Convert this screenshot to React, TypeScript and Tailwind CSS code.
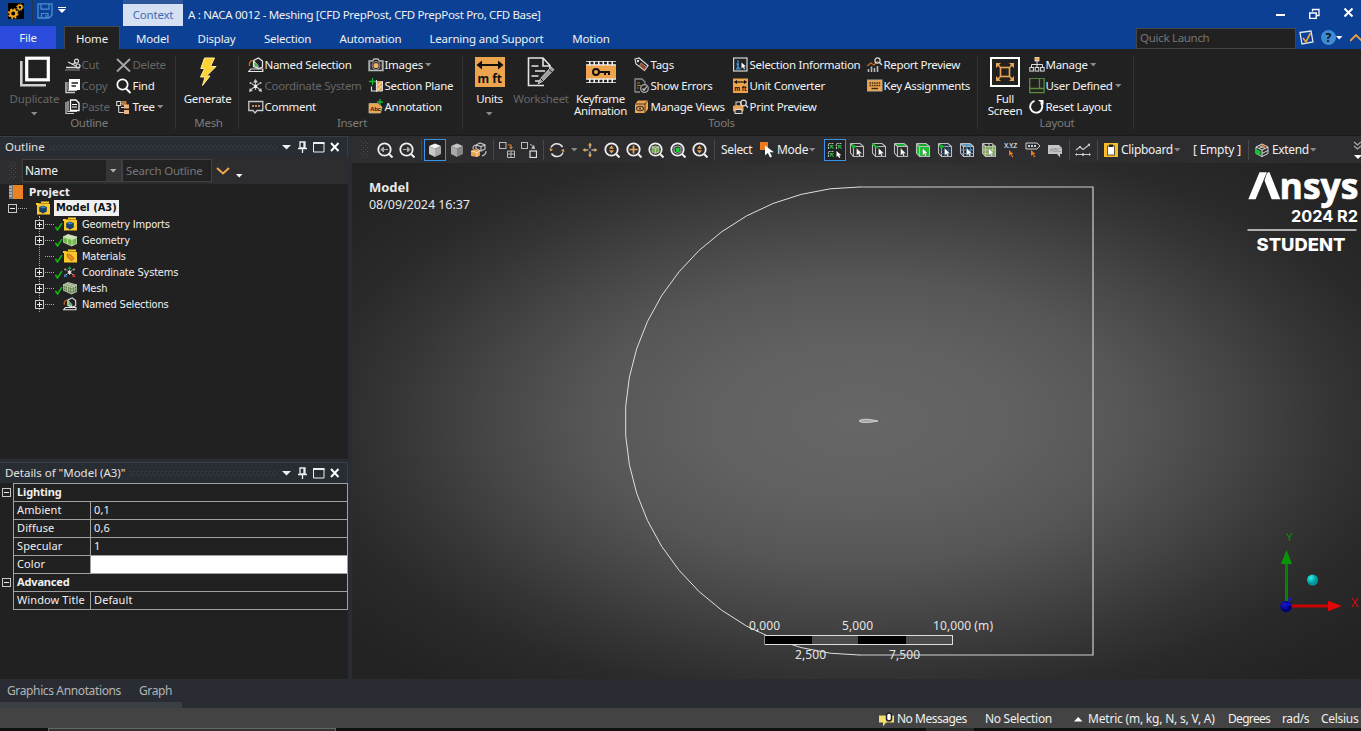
import React from "react";

type P = { children?: React.ReactNode };

const Svg = ({ children, w = 16, h = 16, box }: P & { w?: number; h?: number; box?: string }) => (
  <svg width={w} height={h} viewBox={box ?? `0 0 ${w} ${h}`} fill="none" className="block shrink-0">
    {children}
  </svg>
);

const Arrow = ({ c = "#8a8a8a" }: { c?: string }) => (
  <Svg w={7} h={4}><path d="M0 0h6.500L3.200 3.500z" fill={c} /></Svg>
);

/* ---------- title bar icons ---------- */
const Gears = () => (
  <Svg w={16} h={16}>
    <rect width="16" height="16" fill="#000" />
    <circle cx="5.2" cy="10.6" r="3" stroke="#f5a81c" strokeWidth="2" />
    <circle cx="5.2" cy="10.6" r="4.6" stroke="#f5a81c" strokeWidth="1.4" strokeDasharray="2 1.6" />
    <circle cx="11.9" cy="4.2" r="2" stroke="#f5a81c" strokeWidth="1.5" />
    <circle cx="11.9" cy="4.2" r="3.2" stroke="#f5a81c" strokeWidth="1" strokeDasharray="1.4 1.1" />
  </Svg>
);
const Save = () => (
  <Svg w={16} h={16}>
    <path d="M1 .8h14v11.4L11.8 15H1z" stroke="#4a90d0" strokeWidth="1.3" />
    <path d="M4 1v5.2h8V1M4.500 15v-4.500h6.500V15M9 12v3" stroke="#4a90d0" strokeWidth="1.200" />
  </Svg>
);

/* ---------- ribbon icons ---------- */
const Duplicate = () => (
  <Svg w={30} h={31}>
    <path d="M1.300 5v24.200H26" stroke="#d0d0d0" strokeWidth="2.600" />
    <rect x="6.700" y="2.200" width="21.600" height="21.600" stroke="#fff" strokeWidth="3.200" />
  </Svg>
);
const Cut = () => (
  <Svg>
    <path d="M1 10.500h14" stroke="#ddd" strokeWidth="1.500" />
    <path d="M3 5l8 4" stroke="#ddd" strokeWidth="1.300" />
    <circle cx="11.500" cy="4.200" r="2" stroke="#ddd" strokeWidth="1.200" />
    <circle cx="13" cy="9" r="2" stroke="#ddd" strokeWidth="1.200" />
    <path d="M7 7.500l3.500-2" stroke="#ddd" strokeWidth="1.200" />
    <path d="M0 13h15" stroke="#888" strokeWidth="1" />
  </Svg>
);
const Copy = () => (
  <Svg>
    <path d="M1 4v10.500h9" stroke="#ccc" strokeWidth="1.400" />
    <rect x="4" y="1" width="11" height="11" fill="#fff" />
    <path d="M3 4v8.500h9" stroke="#ccc" />
    <path d="M6.500 5h6.500M6.500 8h4.500" stroke="#222" strokeWidth="1.500" />
  </Svg>
);
const Paste = () => (
  <Svg>
    <path d="M1 3v11.500h8M3 2v10.500h9" stroke="#ccc" strokeWidth="1.200" />
    <path d="M5.500 1h5.500l3 3v7.500H5.500z" stroke="#fff" strokeWidth="1.300" />
    <path d="M7 5.500h5M7 8h5" stroke="#fff" />
  </Svg>
);
const Delete = () => <Svg><path d="M1 2l13 12.500M14 2L1 14.500" stroke="#a8a8a8" strokeWidth="1.800" /></Svg>;
const Find = () => (
  <Svg><circle cx="6.500" cy="6.500" r="5.200" stroke="#fff" strokeWidth="1.700" /><path d="M10 10.500l4.500 4.500" stroke="#fff" strokeWidth="2" /></Svg>
);
const Tree = () => (
  <Svg>
    <rect x=".7" y="2.500" width="4" height="4" stroke="#ddd" />
    <path d="M2.700 7v6.500h5M4.500 4.500h2M5 8.500h3.500" stroke="#ddd" />
    <rect x="5.500" y="2" width="5" height="4.500" fill="#b8793a" />
    <rect x="8" y="5.500" width="5" height="4" fill="#eeb27a" />
    <rect x="8" y="11" width="5" height="4" fill="#eeb27a" />
  </Svg>
);
const Bolt = () => (
  <Svg w={20} h={30}>
    <path d="M6.500 1h10l-4 8.500h5.500L8.500 19h3.500L4.500 28.500l2.500-8.500H2.500l4-8.500H2.800z" fill="#ffd231" stroke="#fff0a0" strokeWidth="1" />
  </Svg>
);
const Named = () => (
  <Svg>
    <path d="M5.500 3.500l5-2.500 4 3v6l-4 1.500-5-2z" stroke="#e8e8e8" strokeWidth="1.200" />
    <path d="M6 4l4 4.500V11L6 8z" fill="#17b838" stroke="#e8e8e8" strokeWidth=".8" />
    <path d="M4.500 3.500C1.500 4 1 7 1.500 9" stroke="#d66a18" strokeWidth="1.300" />
    <path d="M.8 14.500h14V12H2.800z" stroke="#e8e8e8" strokeWidth="1.200" />
  </Svg>
);
const Coord = ({ color }: { color?: boolean }) => (
  <Svg>
    <path d="M7.500 8V3M7.500 8L2 12.500M7.500 8L13 12.500M7.500 8L3.500 5.500M7.500 8l4-2.500M7.500 8v4" stroke="#bbb" strokeWidth="1.200" strokeDasharray={color ? "3 1" : undefined} />
    <path d="M7.500 1L5 4.500h5z" fill={color ? "#10a030" : "#ccc"} />
    <path d="M1 14l.8-4 3 3z" fill={color ? "#3a7fd0" : "#ccc"} />
    <path d="M14 14l-.8-4-3 3z" fill={color ? "#e03030" : "#ccc"} />
    <circle cx="2.500" cy="5" r="1.100" fill="#bbb" /><circle cx="12.500" cy="5" r="1.100" fill="#bbb" />
    <rect x="6" y="7" width="3" height="3" fill="#eee" />
  </Svg>
);
const Comment = () => (
  <Svg>
    <path d="M.8 2.500h14v9H9l-2 2.500-2-2.500H.8z" stroke="#c8c8c8" strokeWidth="1.300" />
    <path d="M4 7h2M7 7h2M10 7h2" stroke="#eeb27a" strokeWidth="1.500" />
  </Svg>
);
const Camera = () => (
  <Svg>
    <path d="M1 4h3.500L6 2h4l1.500 2H15v9.500H1z" stroke="#bbb" strokeWidth="1.300" />
    <circle cx="8" cy="8.500" r="4" stroke="#999" /><circle cx="8" cy="8.500" r="2.600" fill="#f5b168" />
    <path d="M1.800 5v8M14.200 5v8" stroke="#bbb" />
  </Svg>
);
const Section = () => (
  <Svg>
    <path d="M4.500 0v7M1 3.500h7" stroke="#13b52f" strokeWidth="1.300" />
    <path d="M3.500 8.500V13h4.500M8.500 2v12" stroke="#ddd" strokeWidth="1.200" />
    <rect x="9" y="3" width="5.500" height="10" fill="#eda44e" /><path d="M9.500 8l4-4M9.500 12l4-4" stroke="#fff0d8" />
    <path d="M14.500 3v10H8" stroke="#ddd" />
  </Svg>
);
const Annot = () => (
  <Svg>
    <path d="M1 4.500h9l4 3.500-1.500 6H1z" fill="#eda44e" stroke="#c8b090" strokeWidth=".8" />
    <text x="2" y="11.500" fontSize="6" fontWeight="700" fontFamily="Liberation Sans" letterSpacing="-.2" fill="#222">Abc</text>
    <path d="M12 0v6M9 3h6" stroke="#13b52f" strokeWidth="1.400" />
  </Svg>
);
const Units = () => (
  <Svg w={30} h={30}>
    <rect width="30" height="30" fill="#eda44e" />
    <path d="M3 8h24" stroke="#111" strokeWidth="2" />
    <path d="M1.500 8L7 3.500v9zM28.500 8L23 3.500v9z" fill="#111" />
    <text x="2.500" y="25.500" fontSize="12" fontWeight="700" fontFamily="Noto Sans" letterSpacing="0" textLength="24.500" lengthAdjust="spacingAndGlyphs" fill="#111">m ft</text>
  </Svg>
);
const Worksheet = () => (
  <Svg w={28} h={30}>
    <path d="M17 28.500H1.500V1H16l7 7.500v3M16 1v8h7" stroke="#e4e4e4" strokeWidth="1.600" />
    <path d="M4.500 9h7M8 14h10M4.500 19h7M8 24h5" stroke="#e4e4e4" strokeWidth="1.300" />
    <path d="M11 27l2.500-5.500L24 10l3 2.500-11 11.500z" fill="#9b9b9b" stroke="#ddd" strokeWidth=".8" />
    <path d="M13.500 21.500l2.500 2.500M22 12.500l3 2.500" stroke="#222" />
  </Svg>
);
const Keyframe = () => (
  <Svg w={30} h={22}>
    <rect width="30" height="22" fill="#f4f4f4" />
    <path d="M0 2h30M0 20h30" stroke="#222" strokeWidth="2.600" strokeDasharray="3 1.500" />
    <rect y="4.500" width="30" height="13" fill="#eda44e" />
    <circle cx="10" cy="11" r="3" stroke="#111" strokeWidth="2" /><path d="M13 11h10v3M19 11v3" stroke="#111" strokeWidth="2" />
  </Svg>
);
const Tags = () => (
  <Svg>
    <path d="M1 2l4-1 9 7.500-3.500 5L2 7z" stroke="#ddd" strokeWidth="1.200" />
    <path d="M7 6l5.500 4-2 3-5-4z" fill="#8a4a2a" stroke="#c8a090" strokeWidth=".7" /><circle cx="4" cy="4" r="1.200" fill="#ddd" />
  </Svg>
);
const Errors = () => (
  <Svg>
    <path d="M6 14H1V1h7l3 3v2" stroke="#8c8c8c" strokeWidth="1.300" />
    <path d="M3 5h3M3 7.500h4M3 10h2" stroke="#b87838" />
    <circle cx="10.500" cy="10.500" r="3.800" stroke="#a8a8a8" strokeWidth="1.300" /><path d="M8.500 10.500l1.500 1.700 2.800-3.700" stroke="#ccc" strokeWidth="1.200" />
  </Svg>
);
const Views = () => (
  <Svg w={15}>
    <path d="M1 5l3-3.500h10v8.500l-3 4H1z" fill="#eda44e" /><path d="M1 5h10v9M11 5l3-3.500" stroke="#222" strokeWidth=".8" />
    <ellipse cx="6" cy="9.500" rx="3.500" ry="2.200" stroke="#333" strokeWidth="1.100" /><circle cx="6" cy="9.500" r="1.100" fill="#333" />
  </Svg>
);
const SelInfo = () => (
  <Svg w={15}>
    <rect x=".6" y="1" width="13.400" height="13" stroke="#d8d8d8" strokeWidth="1.200" fill="#242424" />
    <path d="M5 3.500v2M3.500 7H5v4.500M3 11.700h4.500" stroke="#3c8dd0" strokeWidth="1.800" />
    <path d="M8.500 5.500v6l1.500-1.500 1 2.500 1-.5-1-2.500h2z" fill="#fff" />
  </Svg>
);
const UnitConv = () => (
  <Svg>
    <rect y=".5" width="15" height="14.500" fill="#eda44e" />
    <path d="M2 4h11" stroke="#111" strokeWidth="1.200" /><path d="M.8 4L4 2v4zM14.200 4L11 2v4z" fill="#111" />
    <text x="1.200" y="13" fontSize="7" fontWeight="700" fontFamily="Noto Sans" letterSpacing="0" textLength="12.600" lengthAdjust="spacingAndGlyphs" fill="#111">m ft</text>
  </Svg>
);
const Print = () => (
  <Svg>
    <rect x="3" y="3" width="5" height="4" stroke="#ddd" /><rect x="0" y="6.500" width="10.500" height="6" rx="1" fill="#eda44e" />
    <rect x="2" y="10.500" width="7" height="4" fill="#333" stroke="#ddd" />
    <circle cx="10.500" cy="4" r="2.800" stroke="#ddd" strokeWidth="1.200" /><path d="M12.500 6l2.500 2.500" stroke="#ddd" strokeWidth="1.400" />
  </Svg>
);
const Report = () => (
  <Svg>
    <path d="M1.500 15v-3M4.500 15V9.500M7.500 15v-4M10.500 15V9" stroke="#b8b8b8" strokeWidth="1.600" />
    <path d="M0 9l4-3 3 2 4-4" stroke="#c26a20" strokeWidth="1.300" />
    <circle cx="10.500" cy="3.500" r="2.600" stroke="#ddd" strokeWidth="1.200" /><path d="M12.500 5.500L15 8" stroke="#ddd" strokeWidth="1.400" />
  </Svg>
);
const Keyboard = () => (
  <Svg w={16}>
    <rect x=".5" y="2" width="14.500" height="11" fill="#eda44e" stroke="#b8a890" />
    <path d="M2.500 5h11M2.500 7.500h11" stroke="#3a2a10" strokeWidth="1.500" strokeDasharray="1.500 .8" /><path d="M4.500 10.500h6.500" stroke="#3a2a10" strokeWidth="1.400" />
  </Svg>
);
const Full = () => (
  <Svg w={30} h={30}>
    <rect x="1" y="1" width="28" height="28" stroke="#fff" strokeWidth="2" />
    <rect x="10.500" y="10.500" width="9" height="9" stroke="#eda44e" strokeWidth="1.600" />
    <path d="M10 10L6.500 6.500M20 10l3.500-3.500M10 20l-3.500 3.500M20 20l3.500 3.500" stroke="#eda44e" strokeWidth="1.600" />
    <path d="M6 11V6h5zM24 11V6h-5zM6 19v5h5zM24 19v5h-5z" fill="#eda44e" />
  </Svg>
);
const Manage = () => (
  <Svg>
    <rect x="6" y="0" width="4" height="4" fill="#eda44e" stroke="#fff" strokeWidth=".7" />
    <path d="M8 4v6M2.500 10.500V7.500h11v3" stroke="#ddd" />
    <rect x=".8" y="10.500" width="3.600" height="3.600" stroke="#ddd" /><rect x="6.200" y="10.500" width="3.600" height="3.600" stroke="#ddd" /><rect x="11.600" y="10.500" width="3.600" height="3.600" stroke="#ddd" />
  </Svg>
);
const UserDef = () => (
  <Svg><rect x=".7" y=".2" width="14.400" height="14.400" stroke="#5d8c3c" strokeWidth="1.300" /><path d="M1 10.500h14M10.500 .5v10" stroke="#5d8c3c" strokeWidth="1.300" /></Svg>
);
const Reset = () => (
  <Svg><path d="M5.500 1.900A6 6 0 1 0 12 4" stroke="#fff" strokeWidth="1.900" /><path d="M9 1h5.500v5z" fill="#fff" /></Svg>
);

/* ---------- graphics toolbar icons ---------- */
const Lens = ({ children }: P) => (
  <Svg>
    <circle cx="7.500" cy="7.500" r="6.200" stroke="#f0f0f0" strokeWidth="1.800" /><path d="M12 12l3.500 3.500" stroke="#f0f0f0" strokeWidth="2" />
    {children}
  </Svg>
);
const Solid = ({ top = "#f4f4f4", left = "#c8c8c8", right = "#a8a8a8" }) => (
  <Svg>
    <path d="M8 1.500l6 2.500-6 2.800L2 4z" fill={top} /><path d="M2 4l6 2.800V15l-6-3z" fill={left} /><path d="M14 4L8 6.800V15l6-3z" fill={right} />
  </Svg>
);
const Cursor = ({ c = "#fff" }: { c?: string }) => (
  <path d="M7.500 6v7.500l1.800-1.600 1.300 3 1.300-.6-1.300-2.900h2.400z" fill={c} stroke="#222" strokeWidth=".3" />
);
const Wire = ({ face, front, dot, edge, mesh }: { face?: string; front?: string; dot?: boolean; edge?: boolean; mesh?: string }) => (
  <Svg>
    {face && <path d="M1.500 1.500h9.500l3.500 3H5z" fill={face} />}
    {front && <path d="M4.500 4.500h10v10h-10zM1.500 2v9l3 3v-9.500z" fill={front} />}
    <path d="M4.500 4.500h10v10h-10zM1.500 1.500l3 3M1.500 1.500H11l3.500 3M1.500 1.500v9.500l3 3.500" stroke="#bdbdbd" strokeWidth="1.100" />
    {mesh && <path d="M8 2v12M11.500 3v11M2 8h12M3 11.500h11" stroke={mesh} strokeWidth="1" />}
    {edge && <path d="M1.500 1.500l3 3 3 .5" stroke="#13b52f" strokeWidth="2.200" />}
    {dot && <circle cx="4.500" cy="4.500" r="1.900" fill="#13b52f" />}
    <Cursor />
  </Svg>
);
const GridSel = () => (
  <Svg>
    <path d="M1.500 7V1.500H7M9.500 7V1.500H15M1.500 15V9.500H7" stroke="#bbb" strokeDasharray="2 .8" strokeWidth="1.200" />
    <path d="M3 3h4L5.500 4.500 7 6.500l-1 .5-1.500-1.500L3 7zM11 3h4l-1.500 1.500L15 6.500l-1 .5-1.500-1.500L11 7zM3 11h4l-1.500 1.500L7 14.500l-1 .5-1.500-1.500L3 15z" fill="#23a43a" />
    <path d="M9.500 9v6l1.500-1.300 1 2.300 1.300-.6-1-2.200h2z" fill="#fff" />
  </Svg>
);

/* ---------- building blocks ---------- */
const Item = ({ icon, label, off, drop }: { icon: React.ReactNode; label: string; off?: boolean; drop?: boolean }) => (
  <div className={`flex h-[21px] items-center whitespace-nowrap ${off ? "text-[#666]" : "text-[#f2f2f2]"}`}>
    <span className="flex w-[16.500px] shrink-0">{icon}</span>
    <span>{label}</span>
    {drop && <span className="ml-[2px]"><Arrow /></span>}
  </div>
);
const Big = ({ icon, label, off, drop, w }: { icon: React.ReactNode; label: React.ReactNode; off?: boolean; drop?: boolean; w: string }) => (
  <div className={`flex shrink-0 flex-col items-center text-center ${w} ${off ? "text-[#666]" : "text-[#f2f2f2]"}`}>
    <div className="flex h-[35px] items-center">{icon}</div>
    <div className="mt-[4px] leading-[11.500px] whitespace-nowrap">{label}</div>
    {drop && <div className="mt-[7px]"><Arrow /></div>}
  </div>
);
const Group = ({ w, label, children }: P & { w: string; label: string }) => (
  <div className={`flex h-[86px] shrink-0 ${w}`}>
    <div className="flex min-w-0 flex-1 flex-col pt-[5px]">
      <div className="flex h-[63px]">{children}</div>
      <div className="pl-[3px] text-center leading-[12px] text-[#7c7c7c]">{label}</div>
    </div>
    <div className="mt-[7px] h-[73px] w-px bg-[#333]" />
  </div>
);
const Col = ({ w, children }: P & { w: string }) => <div className={`flex shrink-0 flex-col ${w}`}>{children}</div>;
const Sep = () => <div className="flex w-[6px] shrink-0 justify-center"><div className="h-[20px] w-px bg-[#484848]" /></div>;
const Cell = ({ children, on }: P & { on?: boolean }) => (
  <div className={`flex size-[22px] shrink-0 items-center justify-center ${on ? "border border-[#3494f0] bg-[#222]" : ""}`}>{children}</div>
);
const Dots = ({ className }: { className: string }) => (
  <svg className={`block ${className}`}>
    <defs>
      <pattern id="grip" width="4" height="4" patternUnits="userSpaceOnUse">
        <path d="M0 0h1v1H0zM2 2h1v1H2z" fill="#45494f" />
      </pattern>
    </defs>
    <rect width="100%" height="100%" fill="url(#grip)" />
  </svg>
);

const Header = ({ title }: { title: string }) => (
  <div className="flex h-[21px] items-center border-t border-r border-[#3a3d43] bg-[#282c33] pr-[7px] pl-[5px] text-[#e2e2e2]">
    <span className="tracking-[-0.020px] whitespace-nowrap">{title}</span>
    <Dots className="mr-[4px] ml-[5px] h-[5px] w-0 flex-1" />
    <Svg w={9} h={5}><path d="M0 0h9L4.500 4.500z" fill="#eee" /></Svg>
    <span className="ml-[7px]"><Svg w={9} h={12}><path d="M2 1h5v6H2zM0 7.500h9M4.500 8v4M6 1v6" stroke="#eee" strokeWidth="1.300" /></Svg></span>
    <span className="ml-[6px]"><Svg w={12} h={11}><path d="M.5 1h10.500v9H.5z" stroke="#eee" /><path d="M0 1h11.500" stroke="#eee" strokeWidth="2" /></Svg></span>
    <span className="ml-[5px]"><Svg w={10} h={10}><path d="M1 1l7.500 8M8.500 1L1 9" stroke="#fff" strokeWidth="1.900" /></Svg></span>
  </div>
);

const Expander = ({ minus }: { minus?: boolean }) => (
  <Svg w={9} h={9}><rect x=".5" y=".5" width="8" height="8" stroke="#c8c8c8" /><path d={minus ? "M2 4.500h5" : "M2 4.500h5M4.500 2v5"} stroke="#eee" /></Svg>
);

/* ---------- tree icons ---------- */
const Folder = ({ cube, tag }: { cube?: boolean; tag?: boolean }) => (
  <Svg w={14} h={14}>
    <path d="M0 2h5V.5h8V3h1v10.500H1V4H0z" fill="#fcc92c" />
    <path d="M3 2.500h10" stroke="#b88a10" />
    {cube && <><path d="M7 4.500l3.800 1.500v4.500L7 12.500l-3.800-2V6z" fill="#14406e" /><path d="M7 5l3 1.200L7 7.600 4 6.200z" fill="#3f86c4" /></>}
    {tag && <path d="M4 5l3 .3 4 4-2.500 2.700-4-4z" fill="#e88a28" stroke="#a06010" strokeWidth=".7" />}
  </Svg>
);
const GeoBlock = ({ mesh }: { mesh?: boolean }) => (
  <Svg w={14} h={14}>
    <path d="M0 4l5-2.500L14 4v6.500L8.500 13 0 9z" fill={mesh ? "#5f7a45" : "#74b74a"} />
    <path d="M0 4l5-2.500L14 4 9 6.500z" fill={mesh ? "#7f9368" : "#c3e2ae"} />
    <path d="M0 4l9 2.500 5-2.500M9 6.500V13M4.500 5.200V11M4 2.500l8 3M0 4v5l8.500 4 5.500-2.500V4L5 1.500z" stroke="#dfe9d6" strokeWidth=".7" />
    {mesh && <path d="M0 6.500l9 3 5-2.500M2.500 5v5M6.500 6v6M11.500 5.500v6M2 3l9 2.500" stroke="#c8d2be" strokeWidth=".5" />}
  </Svg>
);

const rows = [
  { label: "Geometry Imports", icon: <Folder cube />, exp: true, ok: true },
  { label: "Geometry", icon: <GeoBlock />, exp: true, ok: true },
  { label: "Materials", icon: <Folder tag />, exp: false, ok: true },
  { label: "Coordinate Systems", icon: <Coord color />, exp: true, ok: true },
  { label: "Mesh", icon: <GeoBlock mesh />, exp: true, ok: true },
  { label: "Named Selections", icon: <Named />, exp: true, ok: false },
];

const details: [string, string][][] = [
  [["Ambient", "0,1"], ["Diffuse", "0,6"], ["Specular", "1"], ["Color", "#"]],
  [["Window Title", "Default"]],
];

const DetailGroup = ({ name, list }: { name: string; list: [string, string][] }) => (
  <div className="flex">
    <div className="w-[13px] shrink-0 pt-[4px] pl-[2px]"><Expander minus /></div>
    <div className="flex-1 border-x border-[#a0a0a0]">
      <div className="h-[18px] border-b border-[#a0a0a0] pl-[3px] leading-[16px] font-bold tracking-[-0.150px]">{name}</div>
      {list.map(([k, v]) => (
        <div key={k} className="flex h-[18px] border-b border-[#a0a0a0] leading-[16px]">
          <div className="w-[77px] shrink-0 border-r border-[#a0a0a0] pl-[3px] whitespace-nowrap">{k}</div>
          {v === "#" ? <div className="flex-1 bg-white" /> : <div className="pl-[3px]">{v}</div>}
        </div>
      ))}
    </div>
  </div>
);

/* far-field boundary: 25 chords on a half circle closed by a box */
const boundary = Array.from({ length: 26 }, (_, i) => {
  const a = Math.PI / 2 + (i * Math.PI) / 25;
  return `${(507.500 + 234.300 * Math.cos(a)).toFixed(1)},${(258 - 234 * Math.sin(a)).toFixed(1)}`;
}).join(" ");

const Viewport = () => (
  <div className="relative ml-px h-[516px] overflow-hidden bg-[radial-gradient(ellipse_545px_285px_at_508px_258px,#666_0%,#616161_28%,#565656_50%,#464646_68%,#353535_86%,#2a2a2a_100%,#222_122%)]">
    <svg width="1009" height="516" viewBox="0 0 1009 516" fill="none" className="absolute inset-0">
      <polyline points={boundary} stroke="#e0e0e0" strokeWidth="1" />
      <path d="M507 24h234v468H507" stroke="#cfcfcf" strokeWidth="1.200" />
      <path d="M507 258c2-2.400 9-2.400 19 0-10 2-17 2-19 0z" fill="#aaa" stroke="#ddd" strokeWidth=".8" />
      <rect x="413" y="472.500" width="187.500" height="9" fill="none" stroke="#ddd" />
      <path d="M413 473h47v8h-47zM506 473h48v8h-48z" fill="#000" />
      <path d="M460 473h46v8h-46zM554 473h46v8h-46z" fill="#4b4b4b" />
      <path d="M934.500 441v-44" stroke="#078207" strokeWidth="3" /><path d="M934.500 387l5.500 14h-11z" fill="#079607" />
      <path d="M934 443h44" stroke="#c80404" strokeWidth="3.200" /><path d="M990 443l-14-5.200v10.400z" fill="#e00808" />
      <circle cx="934" cy="443.500" r="5.700" fill="url(#blue)" /><circle cx="960.500" cy="417" r="5.500" fill="url(#cyan)" />
      <defs>
        <radialGradient id="blue" cx=".35" cy=".35"><stop stopColor="#1818d8" /><stop offset="1" stopColor="#000078" /></radialGradient>
        <radialGradient id="cyan" cx=".35" cy=".3"><stop stopColor="#30f0f0" /><stop offset="1" stopColor="#009898" /></radialGradient>
      </defs>
      <g fontFamily="Noto Sans" fontSize="12" letterSpacing="0" fill="#e4e4e4">
        <text x="397" y="467" textLength="31">0,000</text>
        <text x="490" y="467" textLength="31">5,000</text>
        <text x="581" y="467" textLength="60">10,000 (m)</text>
        <text x="443" y="496" textLength="31">2,500</text>
        <text x="537" y="496" textLength="31">7,500</text>
      </g>
      <g fontFamily="Noto Sans" fontSize="11.500" letterSpacing="0">
        <text x="934" y="378" fill="#0a8a0a">Y</text><text x="999" y="444" fontSize="12.500" fill="#d80808">X</text><text x="935" y="442" fontSize="9" fill="#1818ff">Z</text>
      </g>
      {/* brand mark */}
      <path d="M896.300 36.300l11.200-27h7.300l-11.200 27zM914.800 10.500l1.400-1.200h1.300l10.800 27h-8.600l-7.200-18.800z" fill="#fff" />
      <text x="927.500" y="36.300" fontFamily="Open Sans" fontSize="36.500" fontWeight="700" letterSpacing="0" textLength="79" lengthAdjust="spacingAndGlyphs" fill="#fff" stroke="#fff" strokeWidth=".7">nsys</text>
      <text x="939" y="59" fontFamily="Inter" fontSize="16" fontWeight="700" letterSpacing="0" textLength="67" lengthAdjust="spacingAndGlyphs" fill="#fff">2024 R2</text>
      <path d="M895.500 67h109" stroke="#ddd" strokeWidth="1.500" />
      <text x="904.500" y="88" fontFamily="Inter" fontSize="18" fontWeight="800" letterSpacing="0" textLength="89" lengthAdjust="spacingAndGlyphs" fill="#fff">STUDENT</text>
    </svg>
    <div className="relative flex flex-col pt-[16px] pl-[17px] text-[13px] leading-[17px] tracking-[-0.050px] text-[#e8e8e8]">
      <span className="font-bold">Model</span>
      <span className="text-[12.500px]">08/09/2024 16:37</span>
    </div>
  </div>
);

const tabs: [string, string][] = [
  ["Home", "w-[56px]"], ["Model", "w-[65px]"], ["Display", "w-[63px]"], ["Selection", "w-[79px]"],
  ["Automation", "w-[87px]"], ["Learning and Support", "w-[145px]"], ["Motion", "w-[64px]"],
];

export default function App() {
  return (
    <div className="flex h-[731px] w-[1361px] flex-col overflow-hidden bg-[#212121] font-['Noto_Sans',sans-serif] text-[11.500px] tracking-[-0.290px] text-[#f0f0f0]">
      {/* title bar */}
      <div className="flex h-[26px] shrink-0 bg-[#0b4094]">
        <div className="flex w-[32px] pt-[3px] pl-[8px]"><Gears /></div>
        <div className="h-[23px] w-px bg-[#26344e]" />
        <div className="w-[20px] pt-[3px] pl-[4px]"><Save /></div>
        <div className="w-[70px] pt-[7px] pl-[5px]"><Svg w={8} h={6}><path d="M0 .5h8" stroke="#fff" /><path d="M0 2h8L4 6z" fill="#fff" /></Svg></div>
        <div className="w-[60px] border-t-4 border-[#2c569c] bg-[#d6e0f3] text-center leading-[22px] tracking-[-0.200px] text-[#3f6cb4]">Context</div>
        <div className="flex-1 pl-[5px] leading-[30px] tracking-[-0.320px] whitespace-nowrap">A : NACA 0012 - Meshing [CFD PrepPost, CFD PrepPost Pro, CFD Base]</div>
        <div className="flex items-center gap-[24px] pr-[7px]">
          <Svg w={10} h={10}><path d="M1 7h9" stroke="#fff" strokeWidth="2" /></Svg>
          <Svg w={11} h={11}><path d="M3.500 3.500V1.500H10v6H8" stroke="#fff" strokeWidth="1.300" /><path d="M.7 5h6.500v5.400H.7z" stroke="#fff" strokeWidth="1.400" /></Svg>
          <Svg w={10} h={10}><path d="M.5 .5l8 8M8.500 .5l-8 8" stroke="#fff" strokeWidth="2" /></Svg>
        </div>
      </div>

      {/* ribbon tabs */}
      <div className="flex h-[23px] shrink-0 bg-[#0b4094] tracking-[-0.200px]">
        <div className="mr-[8px] w-[56px] bg-[#2a4bdb] text-center leading-[24px]">File</div>
        {tabs.map(([t, w], i) => (
          <div key={t} className={`${w} text-center whitespace-nowrap ${i ? "leading-[25px]" : "border border-b-0 border-[#444] bg-[#212121] leading-[23px]"}`}>{t}</div>
        ))}
        <div className="ml-auto flex items-center">
          <div className="mt-[2px] h-[21px] w-[160px] border border-[#454545] bg-[#212121] pl-[3px] leading-[18px] tracking-[-0.300px] text-[#757575]">Quick Launch</div>
          <span className="ml-[3px]"><Svg w={15} h={15}><path d="M1 2.500l11-1.500 2 11L3 14z" stroke="#dde6f4" strokeWidth="1.300" /><path d="M4 8l3 4 4.500-9" stroke="#f0a040" strokeWidth="1.700" /></Svg></span>
          <span className="ml-[7px]"><Svg w={15} h={15}><circle cx="7.500" cy="7.500" r="7.500" fill="#3d8bd2" /><text x="4.500" y="12" fontSize="12" fontWeight="700" fontFamily="Noto Sans" fill="#111">?</text></Svg></span>
          <Arrow c="#fff" />
          <span className="ml-[7px]"><Svg w={11} h={8}><path d="M0 7l6-6 6 6" stroke="#f0a040" strokeWidth="1.800" /></Svg></span>
        </div>
      </div>

      {/* ribbon */}
      <div className="flex h-[87px] shrink-0 border-b border-[#1a1a1a]">
        <Group w="w-[176px]" label="Outline">
          <Big w="w-[65px] pl-[4px]" icon={<Duplicate />} label={<span className="tracking-[-0.150px]">Duplicate</span>} off drop />
          <Col w="w-[51px]"><Item icon={<Cut />} label="Cut" off /><Item icon={<Copy />} label="Copy" off /><Item icon={<Paste />} label="Paste" off /></Col>
          <Col w="w-[59px]"><Item icon={<Delete />} label="Delete" off /><Item icon={<Find />} label="Find" /><Item icon={<Tree />} label="Tree" drop /></Col>
        </Group>
        <Group w="w-[63px]" label="Mesh"><Big w="w-[63px]" icon={<Bolt />} label="Generate" /></Group>
        <Group w="w-[224px]" label="Insert">
          <Col w="w-[129px] pl-[9px]"><Item icon={<Named />} label="Named Selection" /><Item icon={<Coord />} label="Coordinate System" off /><Item icon={<Comment />} label="Comment" /></Col>
          <Col w="w-[90px]"><Item icon={<Camera />} label="Images" drop /><Item icon={<Section />} label="Section Plane" /><Item icon={<Annot />} label="Annotation" /></Col>
        </Group>
        <Group w="w-[515px]" label="Tools">
          <Big w="w-[53px]" icon={<Units />} label="Units" drop />
          <Big w="w-[50px]" icon={<Worksheet />} label="Worksheet" off />
          <Big w="w-[68px] pl-[1px]" icon={<Keyframe />} label={<>Keyframe<br />Animation</>} />
          <Col w="w-[99px]"><Item icon={<Tags />} label="Tags" /><Item icon={<Errors />} label="Show Errors" /><Item icon={<Views />} label="Manage Views" /></Col>
          <Col w="w-[134px]"><Item icon={<SelInfo />} label="Selection Information" /><Item icon={<UnitConv />} label="Unit Converter" /><Item icon={<Print />} label="Print Preview" /></Col>
          <Col w="w-[100px] tracking-[-0.360px]"><Item icon={<Report />} label="Report Preview" /><Item icon={<Keyboard />} label="Key Assignments" /></Col>
        </Group>
        <Group w="w-[156px]" label="Layout">
          <Big w="w-[51px] pl-[3px]" icon={<Full />} label={<>Full<br />Screen</>} />
          <Col w="w-[100px]"><Item icon={<Manage />} label="Manage" drop /><Item icon={<UserDef />} label="User Defined" drop /><Item icon={<Reset />} label="Reset Layout" /></Col>
        </Group>
      </div>

      {/* workspace */}
      <div className="flex h-[543px] shrink-0 bg-[#292d33]">
        <div className="flex w-[348px] flex-col">
          <Header title="Outline" />
          <div className="flex h-[27px] items-center bg-[#2d2d30] pl-[9px]">
            <Dots className="mr-[5px] h-[17px] w-[8px]" />
            <div className="flex h-[23px] w-[100px] items-center border border-[#404040] bg-[#222]">
              <span className="flex-1 pl-[2px] text-[12px]">Name</span>
              <span className="flex h-full w-[15px] items-center justify-center bg-[#353538]"><Arrow c="#b0b0b0" /></span>
            </div>
            <div className="h-[23px] w-[90px] border border-[#404040] bg-[#222] pl-[3px] leading-[21px] tracking-[-0.180px] whitespace-nowrap text-[#777]">Search Outline</div>
            <span className="ml-[4px]"><Svg w={14} h={8}><path d="M1 1l6 5.500L13 1" stroke="#f0a848" strokeWidth="2" /></Svg></span>
            <span className="mt-[10px] ml-[6px]"><Arrow c="#fff" /></span>
          </div>
          <div className="h-[275px] bg-[#212121] font-['DejaVu_Sans_Condensed','DejaVu_Sans',sans-serif] text-[11px] tracking-[-0.180px]">
            <div className="flex h-[16px] items-center pl-[9px]">
              <Svg w={14} h={14}><rect x="4" width="10" height="14" fill="#e88223" /><rect width="4" height="14" fill="#777" /><path d="M0 2h3M0 5h3M0 8h3M0 11h3" stroke="#ddd" /></Svg>
              <b className="pt-[2px] pl-[6px] tracking-[0.200px]">Project</b>
            </div>
            <div className="flex h-[16px] items-center pl-[8px]">
              <Expander minus />
              <div className="mr-[9px] ml-px w-[9px] border-t border-dotted border-[#aaa]" />
              <Folder cube />
              <b className="ml-[4px] bg-[#f0f0f0] pr-[2px] pl-[2px] leading-[16px] tracking-[-0.020px] text-[#111]">Model (A3)</b>
            </div>
            <div className="ml-[39px] border-l border-dotted border-[#aaa]">
              {rows.map((r, i) => (
                <div key={r.label} className={`flex h-[16px] items-center ${i === 5 ? "bg-[#212121]" : ""}`}>
                  <span className="-ml-[5px] w-[9px] shrink-0">{r.exp && <span className="block bg-[#212121]"><Expander /></span>}</span>
                  <span className="mr-px ml-px w-[9px] border-t border-dotted border-[#aaa]" />
                  <span className="mt-[6px] w-[8px]">{r.ok && <Svg w={8} h={8}><path d="M.5 4l2 3L7 0" stroke="#12b312" strokeWidth="1.600" /></Svg>}</span>
                  <span className="flex w-[19px] [&>svg]:size-[14px]">{r.icon}</span>
                  <span className="pt-[2px]">{r.label}</span>
                </div>
              ))}
            </div>
          </div>
          <div className="h-[3px]" />
          <Header title='Details of "Model (A3)"' />
          <div className="h-[196px] bg-[#212121] text-[11px] tracking-[0.100px]">
            <div className="ml-[13px] h-0 border-t border-[#a0a0a0]" />
            <DetailGroup name="Lighting" list={details[0]} />
            <DetailGroup name="Advanced" list={details[1]} />
          </div>
        </div>

        <div className="flex min-w-0 flex-1 flex-col pl-[3px]">
          <div className="flex h-[27px] shrink-0 items-center bg-[#2d2d30] text-[12px]">
            <div className="w-[23px] pl-[10px]"><Dots className="h-[17px] w-[7px]" /></div>
            <Cell><Lens><path d="M4 7.500h7M4 7.500L6.500 5v5z" stroke="#aaa" fill="#aaa" /></Lens></Cell>
            <Cell><Lens><path d="M4 7.500h7M11 7.500L8.500 5v5z" stroke="#aaa" fill="#aaa" /></Lens></Cell>
            <Sep />
            <Cell on><Solid /></Cell>
            <Cell><Solid top="#c4c4c4" left="#a8a8a8" right="#858585" /></Cell>
            <Cell><Svg><path d="M5 3l4-2 5 2v4L10 9 5 6.500zM5 3l5 1.500L14 3M10 4.500V8M2 7c0-3 1-4 3-4M15 9c0 3-1 4-4 5" stroke="#c4c4c4" strokeWidth="1.200" /><path d="M0 9l3-2 6 1.500v5L6 15l-6-1z" fill="#eda44e" /><path d="M0 9l6 1.500L9 8.500M6 10.500V15" stroke="#fff" strokeWidth=".7" /></Svg></Cell>
            <Sep />
            <Cell><Svg><rect x=".5" y=".5" width="6.500" height="6" stroke="#bbb" /><path d="M9 3h3v3" stroke="#d08030" strokeWidth="1.200" /><path d="M10 5h4l-2 2.500z" fill="#d08030" /><path d="M8.500 9h7v6.500h-7zM12 9v6.500M8.500 12h7" stroke="#bbb" /></Svg></Cell>
            <Cell><Svg><rect x=".5" y=".5" width="6" height="6" stroke="#bbb" /><path d="M9 2l4 3" stroke="#bbb" /><path d="M14 7l-4-.5L13 3z" fill="#ccc" /><rect x="9" y="9" width="6.500" height="6.500" stroke="#ddd" strokeWidth="1.200" /></Svg></Cell>
            <Sep />
            <Cell><Svg><path d="M2 5.500A6.500 6.500 0 0 1 13.500 5M14 10.500a6.500 6.500 0 0 1-11.500 1" stroke="#e4e4e4" strokeWidth="1.500" /><path d="M.5 6l.8 3.500L4 7.500zM15.500 10L14.500 6.500 12 9z" fill="#eda44e" /></Svg></Cell>
            <div className="w-[11px] pl-[3px]"><Arrow /></div>
            <Cell><Svg><path d="M8 3v3.500M8 9.500V13M3 8h3.500M9.500 8H13" stroke="#aaa" strokeWidth="1.600" /><path d="M8 .5l2 3H6zM8 15.500l2-3H6zM.5 8l3-2v4zM15.500 8l-3-2v4z" fill="#eda44e" /></Svg></Cell>
            <Cell><Lens><path d="M7.500 3.500L10 6.800H5zM7.500 11.500L10 8.200H5z" fill="#eda44e" /></Lens></Cell>
            <Cell><Lens><path d="M7.500 3.500v8M3.500 7.500h8" stroke="#eda44e" strokeWidth="1.700" /></Lens></Cell>
            <Cell><Lens><path d="M4 5l3.500-1L11 5v5l-3.500 1.500L4 10z" fill="#74a74a" stroke="#ddd" strokeWidth=".7" /><path d="M4 5l3.500 1.500L11 5M7.500 6.500V11" stroke="#ddd" strokeWidth=".7" /></Lens></Cell>
            <Cell><Lens><path d="M4 5l3.500-1L11 5v5l-3.500 1.500L4 10z" fill="#444" stroke="#ddd" strokeWidth=".7" /><path d="M6 6h3.500v4H6z" fill="#10d030" /></Lens></Cell>
            <Cell><Lens><path d="M7.500 3.500L10 6.800H5zM7.500 11.500L10 8.200H5z" fill="#eda44e" /></Lens></Cell>
            <Sep />
            <span className="w-[40px] pl-[4px] tracking-[-0.350px]">Select</span>
            <span className="w-[20px] pl-[3px]"><Svg><rect width="8" height="8" fill="#ea7a1e" /><path d="M5 3.500v10l2.800-2.500L10 15.500l2-1-2.200-4.300H14z" fill="#fff" /></Svg></span>
            <span className="flex w-[47px] items-center gap-[1px]">Mode<Arrow /></span>
            <Cell on><GridSel /></Cell>
            <Cell><Wire dot /></Cell>
            <Cell><Wire edge /></Cell>
            <Cell><Wire face="#13b52f" /></Cell>
            <Cell><Wire face="#10a828" front="#12c42e" /></Cell>
            <Cell><Wire dot mesh="#31587a" /></Cell>
            <Cell><Wire face="#5aa0c8" mesh="#4a90c0" /></Cell>
            <Cell><Wire front="#7ea458" mesh="#b4cc94" /></Cell>
            <Cell><Svg><text x="1" y="6" fontSize="6.500" fontWeight="700" fontFamily="Liberation Sans" textLength="13" fill="#ccc">X.Y.Z</text><path d="M6 8v6l1.500-1.500 2 3 1-.8-2-2.700h2z" fill="#ea7a1e" /></Svg></Cell>
            <Cell><Svg><path d="M1 1h11l3 3-3 3H1z" stroke="#ccc" /><path d="M3 4h8" stroke="#ccc" strokeWidth="2" strokeDasharray="2 1" /><path d="M6 8v6l1.500-1.500 2 3 1-.8-2-2.700h2z" fill="#ea7a1e" /></Svg></Cell>
            <Cell><Svg><path d="M1 3h11l3 3v6h-2v3.500L10 12H1z" fill="#c4c4c4" /><text x="2.500" y="10" fontSize="6" fontFamily="Liberation Sans" fill="#888">ABC</text></Svg></Cell>
            <Sep />
            <Cell><Svg><path d="M1 8l4-3 3 2.500L14 3M1 12.500h14" stroke="#c8c8c8" strokeWidth="1.200" /><path d="M0 12.500l2-1.500v3zM16 12.500L14 11v3zM15 1.500v3L12.500 2z" fill="#ccc" /><circle cx="5" cy="5" r="1" fill="#ddd" /><circle cx="8" cy="12.500" r="1.200" fill="#ddd" /></Svg></Cell>
            <Sep />
            <span className="w-[21px] pl-[4px]"><Svg w={14} h={14}><rect width="14" height="14" fill="#f8bd28" /><rect x="3.500" y="3" width="7" height="9" fill="#fff" stroke="#333" strokeWidth=".8" /><rect x="5" y="1.500" width="4" height="2.500" fill="#222" /></Svg></span>
            <span className="flex w-[66px] items-center gap-[1px] tracking-[-0.300px]">Clipboard<Arrow /></span>
            <span className="w-[58px] pl-[6px] tracking-[-0.220px] whitespace-nowrap">[ Empty ]</span>
            <Sep />
            <span className="w-[21px] pl-[4px]"><Svg w={14} h={14}><path d="M1 4l6-3 6 3v6.500l-6 3-6-3zM1 4l6 3 6-3M7 7v6.500M4 2.500l6 3M10 2.500L4 5.500M13 7.500l-6 3" stroke="#ddd" /><path d="M1 6l4.500 2v5L1 10.500z" fill="#12c42e" /><path d="M6 3h3v2" stroke="#ea7a1e" strokeWidth="1.500" /></Svg></span>
            <span className="flex items-center gap-[1px] tracking-[-0.350px]">Extend<Arrow /></span>
            <span className="ml-auto"><Svg w={8} h={20}><path d="M1 2l3.500 3L8 2M1 6l3.500 3L8 6" stroke="#aaa" strokeWidth="1.200" /><path d="M1 15h8l-4 4z" fill="#fff" /></Svg></span>
          </div>
          <Viewport />
        </div>
      </div>

      {/* docked tabs */}
      <div className="flex h-[29px] shrink-0 flex-col justify-between bg-[#292d33]">
        <div className="flex gap-[18px] pl-[7px] text-[12px] leading-[23px] tracking-[-0.370px] text-[#b4b4b4]"><span>Graphics Annotations</span><span>Graph</span></div>
        <div className="h-[6px] w-[182px] bg-[#3b3e45]" />
      </div>

      {/* status bar */}
      <div className="flex h-[20px] shrink-0 items-center bg-[#434343] pt-[2px] pl-[879px] text-[12px] tracking-[-0.200px] whitespace-nowrap">
        <Svg w={17} h={16}><path d="M0 4.500h15v7H7l-3 4v-4H0z" fill="#f3dc70" /><rect x="7.500" y="2" width="5" height="8" rx="2.500" fill="#fff" stroke="#222" strokeWidth="1.500" /></Svg>
        <span className="w-[89px] pl-px tracking-[-0.500px]">No Messages</span>
        <span className="w-[89px] tracking-[-0.300px]">No Selection</span>
        <span className="w-[14px]"><Svg w={9} h={5}><path d="M0 4.500h8.500L4.200 0z" fill="#fff" /></Svg></span>
        <span className="w-[140px]">Metric (m, kg, N, s, V, A)</span>
        <span className="w-[54px] tracking-[-0.680px]">Degrees</span>
        <span className="w-[39px] tracking-[-0.400px]">rad/s</span>
        <span className="tracking-[-0.300px]">Celsius</span>
      </div>
      <div className="flex h-[3px] shrink-0 bg-[#101010]">
        <div className="ml-[48px] h-full w-[288px] border border-b-0 border-[#666] bg-[#333]" />
        <div className="ml-[590px] w-[48px] bg-[#2b2b2b]" />
      </div>
    </div>
  );
}
